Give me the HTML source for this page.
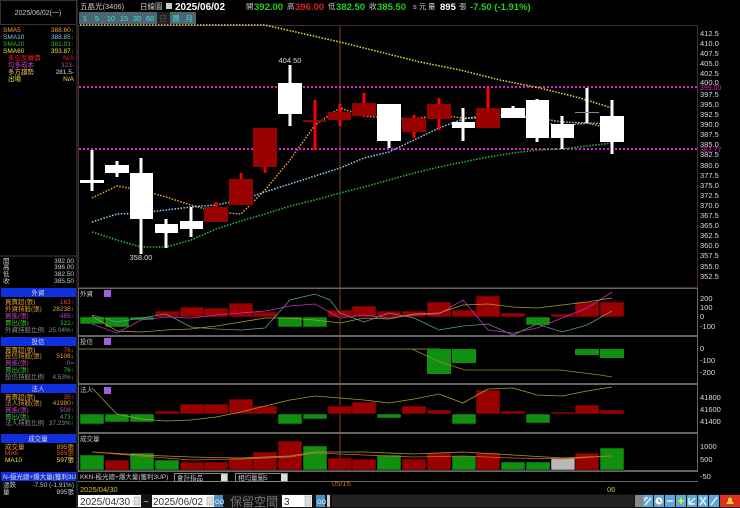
<!DOCTYPE html>
<html><head><meta charset="utf-8"><style>
html,body{margin:0;padding:0;background:#000;}
svg{display:block;font-family:"Liberation Sans","Noto Sans CJK TC",sans-serif;}
</style></head><body>
<svg width="740" height="508" viewBox="0 0 740 508" xmlns="http://www.w3.org/2000/svg">
<rect width="740" height="508" fill="#000"/>
<!-- left panel frames -->
<rect x="0.5" y="0.5" width="76" height="24" fill="#000" stroke="#333"/>
<text x="38" y="15" fill="#ccc" font-size="7" text-anchor="middle">2025/06/02(一)</text>
<line x1="77" y1="0" x2="77" y2="508" stroke="#444"/>
<g font-size="6.5">
<text x="3" y="32" fill="#f0a030">SMA5</text><text x="74" y="32" fill="#f0a030" text-anchor="end">388.60<tspan fill="#0c0">↓</tspan></text>
<text x="3" y="39" fill="#7cc8e8">SMA10</text><text x="74" y="39" fill="#7cc8e8" text-anchor="end">388.85<tspan fill="#0c0">↓</tspan></text>
<text x="3" y="46" fill="#30c030">SMA20</text><text x="74" y="46" fill="#30c030" text-anchor="end">381.93<tspan fill="#f00">↑</tspan></text>
<text x="3" y="53" fill="#e8e040">SMA60</text><text x="74" y="53" fill="#e8e040" text-anchor="end">393.87<tspan fill="#0c0">↓</tspan></text>
<text x="8" y="60" fill="#e02020">多空反轉價</text><text x="74" y="60" fill="#e02020" text-anchor="end">N/A</text>
<text x="8" y="67" fill="#d040d0">均多成本</text><text x="74" y="67" fill="#d040d0" text-anchor="end">323-</text>
<text x="8" y="74" fill="#e0c060">多方趨勢</text><text x="74" y="74" fill="#ddd" text-anchor="end">281.5-</text>
<text x="8" y="81" fill="#e8e040">出場</text><text x="74" y="81" fill="#e8e040" text-anchor="end">N/A</text>
</g>
<line x1="0" y1="256" x2="77" y2="256" stroke="#444"/>
<g font-size="6.5">
<text x="3" y="263" fill="#ccc">開</text><text x="74" y="263" fill="#ccc" text-anchor="end">392.00</text>
<text x="3" y="269" fill="#ccc">高</text><text x="74" y="269" fill="#ccc" text-anchor="end">396.00</text>
<text x="3" y="276" fill="#ccc">低</text><text x="74" y="276" fill="#ccc" text-anchor="end">382.50</text>
<text x="3" y="283" fill="#ccc">收</text><text x="74" y="283" fill="#ccc" text-anchor="end">385.50</text>
<rect x="1" y="288" width="75" height="9" fill="#1030e0"/><text x="38" y="295" fill="#ddd" text-anchor="middle">外資</text>
<text x="5" y="304" fill="#e0a030">買賣超(張)</text><text x="74" y="304" fill="#e05030" text-anchor="end">163↑</text>
<text x="5" y="311" fill="#e0a030">外資持股(張)</text><text x="74" y="311" fill="#e0a030" text-anchor="end">28238↑</text>
<text x="5" y="318" fill="#c040c0">買進(張)</text><text x="74" y="318" fill="#c040c0" text-anchor="end">485↑</text>
<text x="5" y="325" fill="#30c030">賣出(張)</text><text x="74" y="325" fill="#30c030" text-anchor="end">322↑</text>
<text x="5" y="332" fill="#888">外資持股比例</text><text x="74" y="332" fill="#888" text-anchor="end">25.04%↑</text>
<rect x="1" y="337" width="75" height="9" fill="#1030e0"/><text x="38" y="344" fill="#ddd" text-anchor="middle">投信</text>
<text x="5" y="352" fill="#e0a030">買賣超(張)</text><text x="74" y="352" fill="#e05030" text-anchor="end">-76↓</text>
<text x="5" y="358" fill="#e0a030">投信持股(張)</text><text x="74" y="358" fill="#e0a030" text-anchor="end">5106↓</text>
<text x="5" y="365" fill="#c040c0">買進(張)</text><text x="74" y="365" fill="#c040c0" text-anchor="end">0=</text>
<text x="5" y="372" fill="#30c030">賣出(張)</text><text x="74" y="372" fill="#30c030" text-anchor="end">76↑</text>
<text x="5" y="379" fill="#888">投信持股比例</text><text x="74" y="379" fill="#888" text-anchor="end">4.53%↓</text>
<rect x="1" y="384" width="75" height="9" fill="#1030e0"/><text x="38" y="391" fill="#ddd" text-anchor="middle">法人</text>
<text x="5" y="399" fill="#e0a030">買賣超(張)</text><text x="74" y="399" fill="#e05030" text-anchor="end">35↑</text>
<text x="5" y="405" fill="#e0a030">法人持股(張)</text><text x="74" y="405" fill="#e0a030" text-anchor="end">41980↑</text>
<text x="5" y="412" fill="#c040c0">買進(張)</text><text x="74" y="412" fill="#c040c0" text-anchor="end">508↑</text>
<text x="5" y="419" fill="#30c030">賣出(張)</text><text x="74" y="419" fill="#30c030" text-anchor="end">473↑</text>
<text x="5" y="425" fill="#888">法人持股比例</text><text x="74" y="425" fill="#888" text-anchor="end">37.23%↑</text>
<rect x="1" y="434" width="75" height="9" fill="#1030e0"/><text x="38" y="441" fill="#ddd" text-anchor="middle">成交量</text>
<text x="5" y="449" fill="#e0a030">成交量</text><text x="74" y="449" fill="#e0a030" text-anchor="end">895張</text>
<text x="5" y="455" fill="#e05030">MA5</text><text x="74" y="455" fill="#e05030" text-anchor="end">569張</text>
<text x="5" y="462" fill="#e8e040">MA10</text><text x="74" y="462" fill="#e8e040" text-anchor="end">597張</text>
<rect x="1" y="472" width="75" height="9" fill="#1030e0"/><text x="3" y="479" fill="#ddd">N-極光總+爆大量(獲利3U</text>
<text x="3" y="487" fill="#ccc">漲跌</text><text x="74" y="487" fill="#ccc" text-anchor="end">-7.50 (-1.91%)</text>
<text x="3" y="494" fill="#ccc">量</text><text x="74" y="494" fill="#ccc" text-anchor="end">895張</text>
</g>

<!-- top title -->
<g font-size="7.5">
<text x="80" y="9" fill="#ccc">五晶光(3406)</text>
<text x="140" y="9" fill="#ccc">日線圖</text>
<rect x="166" y="3" width="6" height="6" fill="#ccc"/>
<text x="175" y="10" fill="#fff" font-weight="bold" font-size="10">2025/06/02</text>
<text x="246" y="9" fill="#ccc">開</text><text x="254" y="10" fill="#20d020" font-weight="bold" font-size="9.5">392.00</text>
<text x="287" y="9" fill="#ccc">高</text><text x="295" y="10" fill="#e02020" font-weight="bold" font-size="9.5">396.00</text>
<text x="328" y="9" fill="#ccc">低</text><text x="336" y="10" fill="#20d020" font-weight="bold" font-size="9.5">382.50</text>
<text x="369" y="9" fill="#ccc">收</text><text x="377" y="10" fill="#20d020" font-weight="bold" font-size="9.5">385.50</text>
<text x="413" y="9" fill="#ccc">s 元</text>
<text x="428" y="9" fill="#ccc">量</text><text x="440" y="10" fill="#fff" font-weight="bold" font-size="9.5">895</text>
<text x="459" y="9" fill="#ccc">張</text>
<text x="470" y="10" fill="#20d020" font-weight="bold" font-size="9.5">-7.50 (-1.91%)</text>
</g>
<g font-size="7.5" fill="#40e0e0" text-anchor="middle">
<rect x="79" y="12" width="117" height="12" fill="#4a6670"/>
<rect x="157" y="12" width="13" height="12" fill="#222"/>
<text x="85" y="21">1</text><text x="97" y="21">5</text><text x="111" y="21">10</text><text x="124" y="21">15</text><text x="137" y="21">30</text><text x="150" y="21">60</text><text x="163" y="21" fill="#555">日</text><text x="176" y="21">週</text><text x="189" y="21">月</text>
</g>

<!-- main chart frame -->
<rect x="78.5" y="25.5" width="619" height="262" fill="none" stroke="#4a2838"/>
<line x1="340" y1="26" x2="340" y2="470" stroke="#a0502a" stroke-width="0.8"/>
<!-- magenta levels -->
<line x1="79" y1="87" x2="698" y2="87" stroke="#e020c0" stroke-width="2" stroke-dasharray="2 2"/>
<line x1="79" y1="149" x2="698" y2="149" stroke="#e020c0" stroke-width="2" stroke-dasharray="2 2"/>
<!-- MA lines -->
<polyline fill="none" stroke="#e8e040" stroke-width="1.5" stroke-dasharray="1.5 1.5" points="80,25 265,25 300,33 340,42 380,52 420,62 460,70 500,80 540,88 580,98 612,108"/>
<polyline fill="none" stroke="#f0a030" stroke-width="1.5" stroke-dasharray="1.5 1.5" points="92,198 117,186 141,190 166,197 191,205 216,212 241,214 265,190 290,160 315,125 340,108 364,116 389,118 414,119 439,115 463,118 488,118 513,113 537,121 562,126 587,123 612,129"/>
<polyline fill="none" stroke="#90d0f0" stroke-width="1.5" stroke-dasharray="1.5 1.5" points="92,222 117,214 141,213 166,210 191,207 216,205 241,200 265,192 290,184 315,176 340,168 364,158 389,152 414,140 439,128 463,119 488,115 513,115 537,118 562,122 587,123 612,124"/>
<polyline fill="none" stroke="#20c040" stroke-width="1.5" stroke-dasharray="1.5 1.5" points="92,232 117,240 141,247 166,247 191,240 216,229 241,221 265,214 290,206 315,200 340,193 364,187 389,180 414,173 439,167 463,162 488,157 513,153 537,150 562,149 587,146 612,143"/>
<!-- candles -->
<g fill="#fff">
<rect x="90.5" y="150" width="3" height="41"/><rect x="80" y="180" width="24" height="3"/>
<rect x="115.5" y="161" width="3" height="16"/><rect x="105" y="165" width="24" height="8"/>
<rect x="139.5" y="158" width="3" height="96"/><rect x="130" y="173" width="23" height="46"/>
<rect x="164.5" y="219" width="3" height="29"/><rect x="155" y="224" width="23" height="9"/>
<rect x="189.5" y="207" width="3" height="30"/><rect x="180" y="221" width="23" height="8"/>
<rect x="288.5" y="65" width="3" height="61"/><rect x="278" y="83" width="24" height="31"/>
<rect x="387.5" y="104" width="3" height="44"/><rect x="377" y="104" width="24" height="37"/>
<rect x="461.5" y="108" width="3" height="33"/><rect x="452" y="122" width="23" height="6"/>
<rect x="511.5" y="106" width="3" height="12"/><rect x="501" y="108" width="24" height="10"/>
<rect x="535.5" y="99" width="3" height="43"/><rect x="526" y="100" width="23" height="38"/>
<rect x="560.5" y="116" width="3" height="33"/><rect x="551" y="124" width="23" height="14"/>
<rect x="585.5" y="88" width="3" height="35"/>
<rect x="610.5" y="100" width="3" height="54"/><rect x="600" y="116" width="24" height="26"/>
</g>
<rect x="575" y="112" width="24" height="1" fill="#888"/>
<g>
<rect x="214.5" y="202" width="3" height="20" fill="#e00"/><rect x="204" y="207" width="24" height="15" fill="#900"/>
<rect x="239.5" y="173" width="3" height="32" fill="#e00"/><rect x="229" y="179" width="24" height="26" fill="#900"/>
<rect x="263.5" y="128" width="3" height="45" fill="#e00"/><rect x="253" y="128" width="24" height="39" fill="#900"/>
<rect x="313.5" y="100" width="3" height="50" fill="#f00"/><rect x="303" y="120" width="23" height="2" fill="#900"/>
<rect x="338.5" y="104" width="3" height="22" fill="#f00"/><rect x="328" y="112" width="23" height="8" fill="#900"/>
<rect x="362.5" y="93" width="3" height="24" fill="#f00"/><rect x="352" y="103" width="24" height="13" fill="#900"/>
<rect x="412.5" y="115" width="3" height="23" fill="#f00"/><rect x="402" y="118" width="24" height="14" fill="#900"/>
<rect x="437.5" y="98" width="3" height="32" fill="#f00"/><rect x="427" y="104" width="24" height="15" fill="#900"/>
<rect x="486.5" y="88" width="3" height="40" fill="#f00"/><rect x="476" y="108" width="24" height="20" fill="#900"/>
</g>
<text x="290" y="63" fill="#ddd" font-size="7.5" text-anchor="middle">404.50</text>
<text x="141" y="260" fill="#ddd" font-size="7.5" text-anchor="middle">358.00</text>

<!-- right axis labels -->
<g font-size="7.5" fill="#ddd">
<text x="700" y="36">412.5</text><text x="700" y="46">410.0</text><text x="700" y="56">407.5</text><text x="700" y="66">405.0</text><text x="700" y="76">402.5</text><text x="700" y="85">400.0</text><text x="700" y="97">397.5</text><text x="700" y="107">395.0</text><text x="700" y="117">392.5</text><text x="700" y="127">390.0</text><text x="700" y="137">387.5</text><text x="700" y="147">385.0</text><text x="700" y="157">382.5</text><text x="700" y="168">380.0</text><text x="700" y="178">377.5</text><text x="700" y="188">375.0</text><text x="700" y="198">372.5</text><text x="700" y="208">370.0</text><text x="700" y="218">367.5</text><text x="700" y="228">365.0</text><text x="700" y="238">362.5</text><text x="700" y="248">360.0</text><text x="700" y="258">357.5</text><text x="700" y="269">355.0</text><text x="700" y="279">352.5</text>
</g>
<text x="700" y="90" fill="#e020c0" font-size="7">399.00</text>
<text x="700" y="152" fill="#e020c0" font-size="7">383.77</text>

<!-- sub panel frames -->
<g fill="none" stroke="#666">
<rect x="78.5" y="288.5" width="619" height="47"/>
<rect x="78.5" y="336.5" width="619" height="47"/>
<rect x="78.5" y="384.5" width="619" height="48"/>
<rect x="78.5" y="433.5" width="619" height="37"/>
<rect x="78.5" y="471.5" width="619" height="9"/>
</g>
<g font-size="6.5" fill="#ccc">
<text x="80" y="296">外資</text><rect x="104" y="290" width="7" height="7" fill="#a060e0"/>
<text x="80" y="344">投信</text><rect x="104" y="338" width="7" height="7" fill="#a060e0"/>
<text x="80" y="392">法人</text><rect x="104" y="387" width="7" height="7" fill="#a060e0"/>
<text x="80" y="441">成交量</text>
</g>
<!-- panel 1 bars, baseline 317 -->
<g stroke="#000" stroke-width="0.5">
<rect x="80" y="317" width="24" height="7" fill="#109010"/><rect x="105" y="317" width="24" height="10" fill="#109010"/><rect x="130" y="317" width="24" height="3" fill="#109010"/>
<rect x="155" y="311" width="24" height="6" fill="#900"/><rect x="180" y="307" width="24" height="10" fill="#900"/><rect x="204" y="308" width="24" height="9" fill="#900"/><rect x="229" y="303" width="24" height="14" fill="#900"/><rect x="253" y="312" width="24" height="5" fill="#900"/>
<rect x="278" y="317" width="24" height="10" fill="#109010"/><rect x="303" y="317" width="24" height="10" fill="#109010"/>
<rect x="328" y="310" width="24" height="7" fill="#900"/><rect x="352" y="306" width="24" height="11" fill="#900"/><rect x="377" y="311" width="24" height="6" fill="#900"/><rect x="402" y="311" width="24" height="6" fill="#900"/><rect x="427" y="302" width="24" height="15" fill="#900"/><rect x="452" y="310" width="24" height="7" fill="#900"/><rect x="476" y="296" width="24" height="21" fill="#900"/><rect x="501" y="313" width="24" height="4" fill="#900"/>
<rect x="526" y="317" width="24" height="8" fill="#109010"/><rect x="551" y="314" width="24" height="3" fill="#900"/><rect x="575" y="302" width="24" height="15" fill="#900"/><rect x="600" y="302" width="24" height="15" fill="#900"/>
</g>
<polyline fill="none" stroke="#5a9a8a" stroke-width="0.8" points="92,315 117,322 141,318 166,314 191,327 216,329 241,330 265,328 290,300 315,294 330,300 340,313 364,322 389,313 414,318 439,330 463,326 488,324 513,335 537,324 562,332 587,325 612,311"/>
<polyline fill="none" stroke="#c030c0" stroke-width="0.8" points="92,324 117,333 141,320 166,317 191,318 216,315 241,313 265,311 290,306 315,304 340,318 364,315 389,318 414,315 439,314 463,300 488,330 513,333 537,328 562,318 587,308 612,292"/>
<polyline fill="none" stroke="#a0a030" stroke-width="0.8" points="92,316 117,331 141,332 166,330 191,329 216,326 241,322 265,318 290,318 315,320 340,323 364,318 389,319 414,314 439,313 463,305 488,304 513,307 537,308 562,305 587,302 612,298"/>
<!-- panel 2 baseline 349 -->
<line x1="79" y1="349" x2="440" y2="349" stroke="#808020" stroke-width="1"/>
<rect x="427" y="349" width="24" height="25" fill="#109010"/><rect x="452" y="349" width="24" height="14" fill="#109010"/>
<rect x="575" y="349" width="24" height="6" fill="#109010"/><rect x="600" y="349" width="24" height="9" fill="#109010"/>
<polyline fill="none" stroke="#909020" stroke-width="0.8" points="412,349 440,362 465,370 500,370 560,370 600,375 612,377"/>
<!-- panel 3 baseline 414 -->
<g stroke="#000" stroke-width="0.5">
<rect x="80" y="414" width="24" height="10" fill="#109010"/><rect x="105" y="414" width="24" height="8" fill="#109010"/><rect x="130" y="414" width="24" height="8" fill="#109010"/>
<rect x="155" y="411" width="24" height="3" fill="#900"/><rect x="180" y="404" width="24" height="10" fill="#900"/><rect x="204" y="404" width="24" height="10" fill="#900"/><rect x="229" y="399" width="24" height="15" fill="#900"/><rect x="253" y="406" width="24" height="8" fill="#900"/>
<rect x="278" y="414" width="24" height="10" fill="#109010"/><rect x="303" y="414" width="24" height="5" fill="#109010"/>
<rect x="328" y="406" width="24" height="8" fill="#900"/><rect x="352" y="402" width="24" height="12" fill="#900"/>
<rect x="377" y="414" width="24" height="4" fill="#109010"/>
<rect x="402" y="406" width="24" height="8" fill="#900"/><rect x="427" y="410" width="24" height="4" fill="#900"/>
<rect x="452" y="414" width="24" height="10" fill="#109010"/>
<rect x="476" y="390" width="24" height="24" fill="#900"/><rect x="501" y="411" width="24" height="3" fill="#900"/>
<rect x="526" y="414" width="24" height="9" fill="#109010"/>
<rect x="551" y="412" width="24" height="2" fill="#900"/><rect x="575" y="405" width="24" height="9" fill="#900"/><rect x="600" y="410" width="24" height="4" fill="#900"/>
</g>
<polyline fill="none" stroke="#a0a030" stroke-width="0.8" points="92,388 117,414 141,419 166,421 191,420 216,417 241,412 265,406 290,400 315,396 340,398 364,400 389,403 414,399 439,394 463,403 488,389 513,388 537,395 562,396 587,391 612,387"/>
<!-- panel 4 bottom 470 -->
<g stroke="#000" stroke-width="0.5">
<rect x="80" y="455" width="24" height="15" fill="#109010"/><rect x="105" y="460" width="24" height="10" fill="#900"/><rect x="130" y="453" width="24" height="17" fill="#109010"/><rect x="155" y="460" width="24" height="10" fill="#109010"/>
<rect x="180" y="462" width="24" height="8" fill="#900"/><rect x="204" y="462" width="24" height="8" fill="#900"/><rect x="229" y="458" width="24" height="12" fill="#900"/><rect x="253" y="452" width="24" height="18" fill="#900"/><rect x="278" y="441" width="24" height="29" fill="#900"/>
<rect x="303" y="446" width="24" height="24" fill="#109010"/><rect x="328" y="458" width="24" height="12" fill="#900"/><rect x="352" y="459" width="24" height="11" fill="#900"/><rect x="377" y="455" width="24" height="15" fill="#109010"/>
<rect x="402" y="459" width="24" height="11" fill="#900"/><rect x="427" y="453" width="24" height="17" fill="#900"/><rect x="452" y="456" width="24" height="14" fill="#109010"/><rect x="476" y="453" width="24" height="17" fill="#900"/>
<rect x="501" y="462" width="24" height="8" fill="#109010"/><rect x="526" y="462" width="24" height="8" fill="#109010"/><rect x="551" y="458" width="24" height="12" fill="#b8b8b8"/><rect x="575" y="453" width="24" height="17" fill="#900"/><rect x="600" y="448" width="24" height="22" fill="#109010"/>
</g>
<polyline fill="none" stroke="#a0a030" stroke-width="0.8" points="92,452 141,455 191,457 241,458 290,456 315,452 364,452 414,454 463,452 513,455 562,458 612,456"/>
<polyline fill="none" stroke="#e06020" stroke-width="0.8" points="92,452 141,456 191,460 241,459 290,457 315,453 364,455 414,457 463,456 513,458 562,459 612,456"/>
<g font-size="7.5" fill="#ddd">
<text x="700" y="301">200</text><text x="700" y="310">100</text><text x="700" y="319">0</text><text x="700" y="329">-100</text>
<text x="700" y="351">0</text><text x="700" y="363">-100</text><text x="700" y="375">-200</text>
<text x="700" y="400">41800</text><text x="700" y="412">41600</text><text x="700" y="424">41400</text>
<text x="700" y="449">1000</text><text x="700" y="462">500</text><text x="700" y="479">-50</text>
</g>
<!-- select row -->
<rect x="78" y="472" width="620" height="9" fill="#000"/>
<line x1="78" y1="481.5" x2="698" y2="481.5" stroke="#666"/>
<g font-size="6.5" fill="#ccc">
<text x="80" y="479">KKN-極光總+爆大量(獲利3UP)</text>
<rect x="174.5" y="473.5" width="53" height="8" fill="#000" stroke="#888"/><text x="177" y="480">會計指品</text><rect x="221" y="474" width="6" height="7" fill="#ddd"/>
<rect x="235.5" y="473.5" width="52" height="8" fill="#000" stroke="#888"/><text x="238" y="480">相均量圖5</text><rect x="281" y="474" width="6" height="7" fill="#ddd"/>
</g>
<!-- date labels -->
<g font-size="7.5">
<text x="80" y="492" fill="#d0c020">2025/04/30</text>
<text x="332" y="486" fill="#e06030">05/15</text>
<text x="607" y="492" fill="#d0c020">06</text>
</g>
<!-- bottom bar -->
<rect x="78" y="494" width="662" height="14" fill="#111"/>
<rect x="78" y="495" width="63" height="12" fill="#fff"/><text x="80" y="505" font-size="10" fill="#333">2025/04/30</text>
<rect x="134" y="497" width="6" height="8" fill="#ddd" stroke="#999" stroke-width="0.5"/>
<text x="143" y="505" font-size="10" fill="#ccc">~</text>
<rect x="152" y="495" width="63" height="12" fill="#fff"/><text x="153" y="505" font-size="10" fill="#333">2025/06/02</text>
<rect x="207" y="497" width="6" height="8" fill="#ddd" stroke="#999" stroke-width="0.5"/>
<rect x="214" y="495" width="9" height="12" fill="#4a90c0"/><text x="215" y="504" font-size="6" fill="#fff">GO</text>
<text x="230" y="506" font-size="12" fill="#777">保留空間</text>
<rect x="282" y="495" width="30" height="12" fill="#fff"/><text x="284" y="505" font-size="10" fill="#333">3</text>
<rect x="305" y="496" width="6" height="10" fill="#ddd" stroke="#999" stroke-width="0.5"/>
<rect x="316" y="495" width="9" height="12" fill="#4a90c0"/><text x="317" y="504" font-size="6" fill="#fff">GO</text>
<rect x="327" y="495" width="3" height="12" fill="#ccc"/>
<rect x="332" y="495" width="302" height="12" fill="#222"/>
<rect x="635" y="495" width="8" height="12" fill="#888"/>
<g fill="#60a8d8">
<rect x="643" y="495" width="10" height="12"/><rect x="654" y="495" width="10" height="12"/><rect x="665" y="495" width="10" height="12"/><rect x="676" y="495" width="10" height="12"/><rect x="687" y="495" width="10" height="12"/><rect x="698" y="495" width="10" height="12"/><rect x="709" y="495" width="10" height="12"/>
</g>
<g stroke="#fff" stroke-width="1.2" fill="none">
<path d="M645,505 L651,498 M645,498 L645,501 M645,498 L648,498"/>
<circle cx="659" cy="501" r="3.5" fill="#fff" stroke="none"/><path d="M659,499 L659,501 L661,502" stroke="#e06020"/>
<path d="M667,501 L673,501"/>
<path d="M678,501 L684,501 M681,498 L681,504" stroke="#ff0"/>
<path d="M689,504 L695,498 M689,498 L689,504 L695,504"/>
<path d="M700,497 L706,505 M706,497 L700,505"/>
<path d="M711,505 L717,497"/>
</g>
<rect x="720" y="495" width="20" height="12" fill="#e03020"/>
<path d="M726,504 L734,504 L732,501 L732,499 Q730,496 728,499 L728,501 Z" fill="#ffd040"/>
</svg>
</body></html>
